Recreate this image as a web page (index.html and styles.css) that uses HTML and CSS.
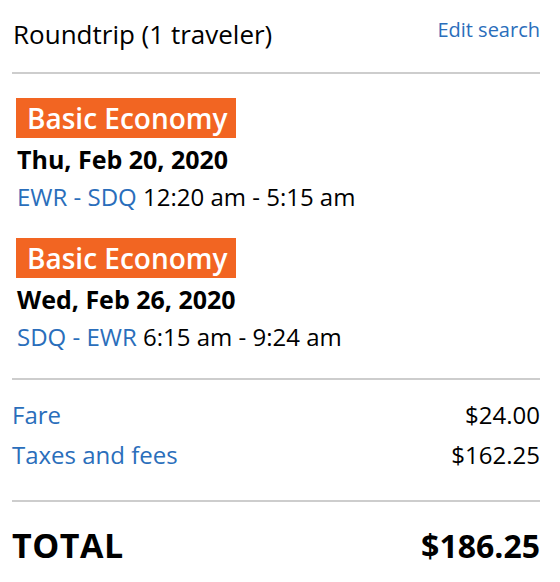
FILE: index.html
```html
<!DOCTYPE html>
<html>
<head>
<meta charset="utf-8">
<link rel="stylesheet" href="styles.css">
</head>
<body>
<div class="summary">
  <div class="header">
    <div class="trip-type">Roundtrip (1 traveler)</div>
    <a class="edit-link" href="#">Edit search</a>
  </div>
  <div class="segments">
    <div class="segment">
      <div class="badge">Basic Economy</div>
      <div class="date">Thu, Feb 20, 2020</div>
      <div class="route"><span class="airports">EWR - SDQ</span> 12:20 am - 5:15 am</div>
    </div>
    <div class="segment">
      <div class="badge">Basic Economy</div>
      <div class="date">Wed, Feb 26, 2020</div>
      <div class="route"><span class="airports">SDQ - EWR</span> 6:15 am - 9:24 am</div>
    </div>
  </div>
  <div class="charges">
    <div class="charge-row"><span class="charge-label">Fare</span><span class="charge-amount">$24.00</span></div>
    <div class="charge-row"><span class="charge-label">Taxes and fees</span><span class="charge-amount">$162.25</span></div>
  </div>
  <div class="total">
    <span class="total-label">TOTAL</span>
    <span class="total-amount">$186.25</span>
  </div>
</div>
</body>
</html>
```
FILE: styles.css
```css
* { box-sizing: border-box; }
html, body { margin: 0; padding: 0; background: #fff; }
body {
  font-family: "Open Sans", "Liberation Sans", sans-serif;
  color: #000;
}
.summary {
  width: 528px;
  margin-left: 12px;
}
.header {
  display: flex;
  justify-content: space-between;
  align-items: flex-start;
  height: 74px;
  border-bottom: 2px solid #cdcdcd;
  padding-top: 16px;
}
.trip-type {
  font-size: 26px;
  line-height: 36px;
  padding-left: 1px;
}
.edit-link {
  font-size: 20px;
  line-height: 28px;
  color: #2a6ebb;
  text-decoration: none;
}
.segments {
  padding: 24px 0 0 4px;
  height: 306px;
  border-bottom: 2px solid #cdcdcd;
}
.segment + .segment { margin-top: 23px; }
.badge {
  display: inline-block;
  background: #f26522;
  color: #fff;
  font-weight: 600;
  font-size: 28px;
  line-height: 40px;
  height: 40px;
  padding: 0 8px 0 11px;
}
.date {
  font-weight: 700;
  font-size: 25px;
  line-height: 36px;
  margin-top: 3px;
  padding-left: 1px;
}
.route {
  font-size: 24px;
  line-height: 36px;
  margin-top: 2px;
  padding-left: 1px;
}
.airports { color: #2a6ebb; }
.charges {
  padding-top: 15px;
  height: 122px;
  border-bottom: 2px solid #cdcdcd;
}
.charge-row {
  display: flex;
  justify-content: space-between;
  font-size: 24px;
  line-height: 40px;
}
.charge-label { color: #2a6ebb; }
.total {
  display: flex;
  justify-content: space-between;
  align-items: baseline;
  font-weight: 700;
  line-height: 50px;
  padding-top: 18px;
}
.total-label {
  font-size: 34px;
  letter-spacing: 0.5px;
}
.total-amount {
  font-size: 32px;
}
```
